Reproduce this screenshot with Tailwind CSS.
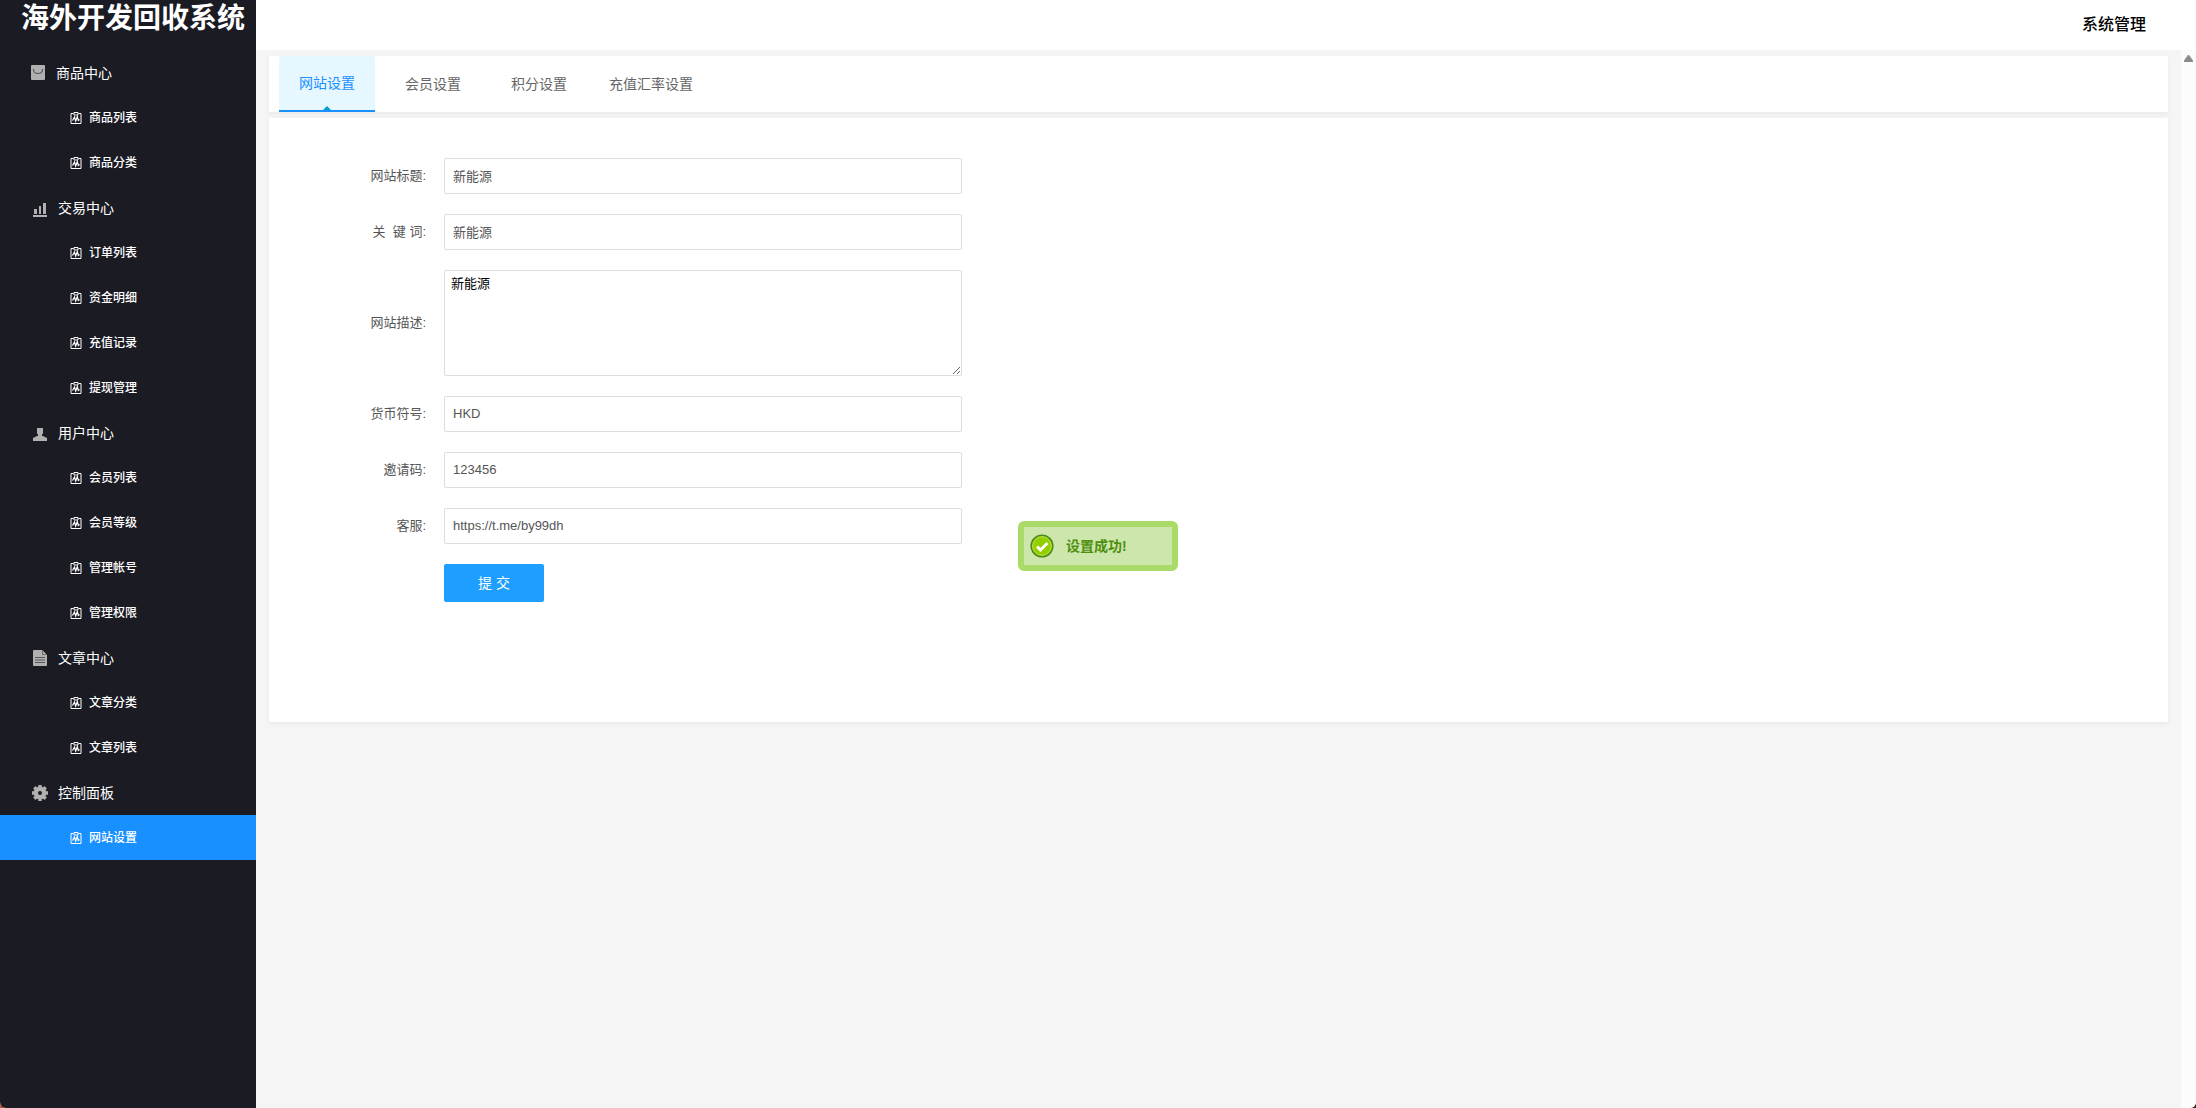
<!DOCTYPE html>
<html lang="zh-CN">
<head>
    <meta charset="UTF-8">
    <meta name="viewport" content="width=device-width, initial-scale=1.0">
    <title>海外开发回收系统</title>
    <script src="https://cdn.jsdelivr.net/npm/@tailwindcss/browser@4"></script>
</head>
<body class="bg-linear-to-r from-[#b8593a] to-[#3a2a22] font-['Liberation_Sans','Noto_Sans_CJK_SC',sans-serif]">
    <!-- Shared icons -->
    <svg class="hidden">
        <symbol id="icon-record" viewBox="0 0 12 12">
            <path d="M3.500 1.500H1v10h10v-10H8.500" fill="none" stroke="currentColor"/>
            <path d="M4 .5h4v2.500H4z" fill="none" stroke="currentColor"/>
            <path d="M2.500 8.500L4.500 5l1.200 4L7.300 4.500l1 4L9.500 7.500" fill="none" stroke="currentColor" stroke-width="1.200"/>
        </symbol>
    </svg>

    <div class="flex min-h-screen overflow-hidden rounded-b-md bg-[#f5f5f5]">
        <!-- Sidebar -->
        <aside class="w-64 shrink-0 bg-[#1b1b24] text-white">
            <h1 class="h-[50px] pl-[21px] text-[28px] leading-[38px] font-bold whitespace-nowrap">海外开发回收系统</h1>
            <nav class="text-xs font-medium">
                <h2 class="flex h-[45px] items-center gap-[11px] pl-[31px] text-sm font-normal">
                    <svg class="h-[15px] w-[14px]" viewBox="0 0 14 15">
                        <rect width="14" height="15" rx="1" fill="#b0b0b0"/>
                        <path d="M2.500 4v1a4.500 3.500 0 0 0 9 0V4" fill="none" stroke="#55555c" stroke-width="1.200"/>
                    </svg>
                    商品中心
                </h2>
                <a href="#" class="flex h-[45px] items-center gap-[7px] pl-[70px]"><svg class="size-3"><use href="#icon-record"/></svg>商品列表</a>
                <a href="#" class="flex h-[45px] items-center gap-[7px] pl-[70px]"><svg class="size-3"><use href="#icon-record"/></svg>商品分类</a>

                <h2 class="flex h-[45px] items-center gap-[10px] pl-8 text-sm font-normal">
                    <svg class="size-4 overflow-visible" viewBox="0 0 16 16" fill="#b0b0b0">
                        <path d="M2 9h3v5H2zM7 6h2v8H7zM11 3h3v11h-3zM1 15h14v2H1z"/>
                    </svg>
                    交易中心
                </h2>
                <a href="#" class="flex h-[45px] items-center gap-[7px] pl-[70px]"><svg class="size-3"><use href="#icon-record"/></svg>订单列表</a>
                <a href="#" class="flex h-[45px] items-center gap-[7px] pl-[70px]"><svg class="size-3"><use href="#icon-record"/></svg>资金明细</a>
                <a href="#" class="flex h-[45px] items-center gap-[7px] pl-[70px]"><svg class="size-3"><use href="#icon-record"/></svg>充值记录</a>
                <a href="#" class="flex h-[45px] items-center gap-[7px] pl-[70px]"><svg class="size-3"><use href="#icon-record"/></svg>提现管理</a>

                <h2 class="flex h-[45px] items-center gap-[10px] pl-8 text-sm font-normal">
                    <svg class="size-4" viewBox="0 0 16 16" fill="#b0b0b0">
                        <path d="M5 3h6v5.500l-1 1V11h1l4 2v3H1v-3l4-2h1V9.500l-1-1z"/>
                    </svg>
                    用户中心
                </h2>
                <a href="#" class="flex h-[45px] items-center gap-[7px] pl-[70px]"><svg class="size-3"><use href="#icon-record"/></svg>会员列表</a>
                <a href="#" class="flex h-[45px] items-center gap-[7px] pl-[70px]"><svg class="size-3"><use href="#icon-record"/></svg>会员等级</a>
                <a href="#" class="flex h-[45px] items-center gap-[7px] pl-[70px]"><svg class="size-3"><use href="#icon-record"/></svg>管理帐号</a>
                <a href="#" class="flex h-[45px] items-center gap-[7px] pl-[70px]"><svg class="size-3"><use href="#icon-record"/></svg>管理权限</a>

                <h2 class="flex h-[45px] items-center gap-[10px] pl-8 text-sm font-normal">
                    <svg class="size-4" viewBox="0 0 16 16">
                        <path d="M2 0h8l5 5v10q0 1-1 1H2q-1 0-1-1V1q0-1 1-1z" fill="#b0b0b0"/>
                        <path d="M10 0v5h5z" fill="#6d6d73"/>
                        <path d="M11 1l3 3h-3z" fill="#b0b0b0"/>
                        <path d="M3 7.500h10M3 10h10M3 12.500h10" stroke="#55555c"/>
                    </svg>
                    文章中心
                </h2>
                <a href="#" class="flex h-[45px] items-center gap-[7px] pl-[70px]"><svg class="size-3"><use href="#icon-record"/></svg>文章分类</a>
                <a href="#" class="flex h-[45px] items-center gap-[7px] pl-[70px]"><svg class="size-3"><use href="#icon-record"/></svg>文章列表</a>

                <h2 class="flex h-[45px] items-center gap-[10px] pl-8 text-sm font-normal">
                    <svg class="size-4" viewBox="0 0 16 16">
                        <circle cx="8" cy="8" r="4.200" fill="none" stroke="#b0b0b0" stroke-width="4.400"/>
                        <path d="M8 0v3M8 13v3M0 8h3M13 8h3M2.300 2.300l2 2M11.700 11.700l2 2M13.700 2.300l-2 2M4.300 11.700l-2 2" stroke="#b0b0b0" stroke-width="3.400"/>
                    </svg>
                    控制面板
                </h2>
                <a href="#" class="flex h-[45px] items-center gap-[7px] bg-[#1890ff] pl-[70px]"><svg class="size-3"><use href="#icon-record"/></svg>网站设置</a>
            </nav>
        </aside>

        <div class="flex min-w-0 flex-1 flex-col">
            <!-- Top bar -->
            <header class="flex h-[50px] items-center justify-end bg-white pr-[50px]">
                <a href="#" class="text-base font-medium text-black">系统管理</a>
            </header>

            <div class="flex flex-1">
                <main class="flex min-w-0 flex-1 flex-col gap-[6px] px-[13px] pt-[6px]">
                    <!-- Tabs -->
                    <nav class="flex gap-[10px] bg-white pl-[10px] text-sm text-[#666] shadow-[0_2px_5px_rgba(0,0,0,0.05)]">
                        <a href="#" class="relative flex h-14 w-24 items-center justify-center rounded-t-xs border-b-2 border-[#1890ff] bg-[#e6f7ff] text-[#1890ff]">
                            网站设置
                            <svg class="absolute bottom-0 left-1/2 h-1 w-2 -translate-x-1/2" viewBox="0 0 8 4"><path d="M4 0l4 4H0z" fill="#009fd9"/></svg>
                        </a>
                        <a href="#" class="flex h-14 w-24 items-center justify-center">会员设置</a>
                        <a href="#" class="flex h-14 w-24 items-center justify-center">积分设置</a>
                        <a href="#" class="flex h-14 items-center px-3">充值汇率设置</a>
                    </nav>

                    <!-- Settings form -->
                    <section class="bg-white pt-10 pb-30 shadow-[0_2px_5px_rgba(0,0,0,0.05)]">
                        <form class="grid grid-cols-[157px_518px] items-center gap-x-[18px] gap-y-5 text-[13px] text-[#555]">
                            <label for="title" class="text-right">网站标题:</label>
                            <input id="title" type="text" value="新能源" class="h-9 rounded-xs border border-[#ddd] px-2 pb-[2px]">

                            <label for="keywords" class="text-right">关&nbsp; 键 词:</label>
                            <input id="keywords" type="text" value="新能源" class="h-9 rounded-xs border border-[#ddd] px-2 pb-[2px]">

                            <label for="description" class="text-right">网站描述:</label>
                            <textarea id="description" class="h-[106px] resize rounded-xs border border-[#ddd] px-[6px] py-[3px] text-black">新能源</textarea>

                            <label for="currency" class="text-right">货币符号:</label>
                            <input id="currency" type="text" value="HKD" class="h-9 rounded-xs border border-[#ddd] px-2 pb-[2px]">

                            <label for="invite" class="text-right">邀请码:</label>
                            <input id="invite" type="text" value="123456" class="h-9 rounded-xs border border-[#ddd] px-2 pb-[2px]">

                            <label for="service" class="text-right">客服:</label>
                            <input id="service" type="text" value="https://t.me/by99dh" class="h-9 rounded-xs border border-[#ddd] px-2 pb-[2px]">

                            <button type="submit" class="col-start-2 h-[38px] w-[100px] rounded-xs bg-[#1e9fff] text-sm text-white">提 交</button>
                        </form>
                    </section>
                </main>

                <!-- Scroll track -->
                <div class="w-[15px] shrink-0 bg-[#fcfcfc] pt-[5px]">
                    <svg class="mx-auto h-[7px] w-[9px]" viewBox="0 0 9 7"><path d="M4 0h1l4 5.500V7H0V5.500z" fill="#8b8b8b"/></svg>
                </div>
            </div>
        </div>
    </div>

    <!-- Success message -->
    <div role="status" class="fixed top-[521px] left-1/2 flex h-[50px] w-40 -translate-x-1/2 items-center gap-3 rounded-md border-6 border-[#aadb68] bg-[#cde6ac] pl-[6px] text-sm font-bold text-[#4f8f10]">
        <svg class="size-6" viewBox="0 0 24 24">
            <circle cx="12" cy="12" r="10.800" fill="#93cf00" stroke="#4c8a1c" stroke-width="1.600"/>
            <circle cx="12" cy="12" r="9.300" fill="none" stroke="#b9e34a"/>
            <path d="M7 12.500l3.500 3.500 7-7" fill="none" stroke="#fff" stroke-width="3"/>
        </svg>
        设置成功!
    </div>
</body>
</html>
